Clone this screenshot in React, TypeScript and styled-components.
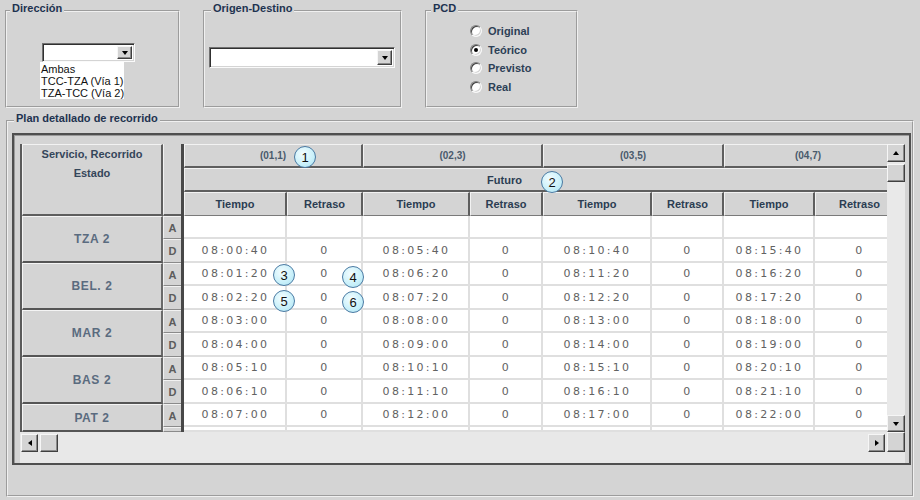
import React from "react";
import styled, { createGlobalStyle, css } from "styled-components";

const BG = "#d4d4d4";
const SANS = `"Liberation Sans", Arial, sans-serif`;
const DATA = `"DejaVu Sans", Verdana, sans-serif`;

const GlobalStyle = createGlobalStyle`
  *, *::before, *::after { box-sizing: border-box; }
  html, body { margin: 0; padding: 0; background: ${BG}; }
  body { font-family: ${SANS}; font-size: 11px; color: #222; }
`;

const raised = css`
  background: ${BG};
  border: 1px solid;
  border-color: #f6f6f6 #404040 #404040 #f6f6f6;
  box-shadow: inset -1px -1px 0 #8a8a8a;
`;

const Page = styled.div`
  position: relative;
  width: 920px;
  height: 500px;
  padding: 2px 6px 0 5px;
  background: ${BG};
  overflow: hidden;
`;

type Dir = "up" | "down" | "left" | "right";

const Arrow = styled.span<{ $dir: Dir }>`
  width: 0;
  height: 0;
  border-style: solid;
  border-color: transparent;
  ${({ $dir }) => {
    switch ($dir) {
      case "up":
        return css`border-width: 0 3.5px 4px 3.5px; border-bottom-color: #000;`;
      case "down":
        return css`border-width: 4px 3.5px 0 3.5px; border-top-color: #000;`;
      case "left":
        return css`border-width: 3.5px 4px 3.5px 0; border-right-color: #000;`;
      default:
        return css`border-width: 3.5px 0 3.5px 4px; border-left-color: #000;`;
    }
  }}
`;

const Btn = styled.div<{ $w: number; $h: number }>`
  ${raised};
  flex: none;
  width: ${(p) => p.$w}px;
  height: ${(p) => p.$h}px;
  display: flex;
  align-items: center;
  justify-content: center;
`;

/* ---------- top group boxes ---------- */

const TopRow = styled.div`
  display: flex;
  gap: 23px;
  height: 106px;
`;

const Group = styled.fieldset<{ $w: number }>`
  width: ${(p) => p.$w}px;
  height: 106px;
  min-width: 0;
  margin: 0;
  padding: 0;
  border: 2px groove #f0f0f0;
`;

const Legend = styled.legend<{ $ml: number }>`
  margin-left: ${(p) => p.$ml}px;
  padding: 0 2px 4px;
  font: bold 11px/13px ${SANS};
  color: #1e3350;
`;

const GroupBody = styled.div<{ $pt: number; $pl: number }>`
  display: flex;
  flex-direction: column;
  align-items: flex-start;
  padding: ${(p) => p.$pt}px 0 0 ${(p) => p.$pl}px;
`;

const Combo = styled.div<{ $w: number; $h: number }>`
  width: ${(p) => p.$w}px;
  height: ${(p) => p.$h}px;
  background: #fff;
  border: 1px solid;
  border-color: #707070 #fafafa #fafafa #707070;
  box-shadow: inset 1px 1px 0 #303030, inset -1px -1px 0 #d4d4d4;
  padding: 2px;
  display: flex;
  justify-content: flex-end;
`;

const ListBox = styled.div`
  margin-left: -2px;
  width: 84px;
  height: 37px;
  background: #fff;
  padding: 1px 0 0 1px;
  font: 11px/12px ${SANS};
  color: #111;
  white-space: nowrap;
`;

const RadioRow = styled.div`
  display: flex;
  align-items: center;
  gap: 6px;
  height: 18.5px;
  font: bold 11px ${SANS};
  color: #2c4056;
`;

const RadioDot = styled.span<{ $on?: boolean }>`
  position: relative;
  flex: none;
  width: 12px;
  height: 12px;
  border-radius: 50%;
  background: #fff;
  border: 1px solid;
  border-color: #808080 #f8f8f8 #f8f8f8 #808080;
  box-shadow: inset 1px 1px 0 #404040, inset -1px -1px 0 #d4d4d4;
  ${(p) =>
    p.$on &&
    css`
      &::after {
        content: "";
        position: absolute;
        left: 3px;
        top: 3px;
        width: 4px;
        height: 4px;
        border-radius: 50%;
        background: #000;
      }
    `}
`;

/* ---------- plan group ---------- */

const PlanGroup = styled.fieldset`
  width: 908px;
  min-width: 0;
  margin: 4px 0 0 1px;
  padding: 4px 1px 30px 4px;
  border: 2px groove #f0f0f0;
`;

const Frame = styled.div`
  width: 899px;
  height: 332px;
  border: 2px solid #4f4f4f;
  box-shadow: inset 1px 1px 0 #9a9a9a;
  padding: 9px 4px 0 6px;
  display: grid;
  grid-template-columns: 164px 703px 18px;
  grid-template-rows: 288px 31px;
`;

const Frozen = styled.div<{ $rows: string }>`
  display: grid;
  grid-template-columns: 141px 18px;
  grid-template-rows: 72px ${(p) => p.$rows};
  border-left: 2px solid #5a5a5a;
  border-right: 3px solid #484848;
  overflow: hidden;
`;

const CornerHead = styled.div`
  grid-column: 1;
  background: ${BG};
  border-top: 1px solid #f2f2f2;
  border-left: 1px solid #f2f2f2;
  border-right: 2px solid #5e5e5e;
  border-bottom: 2px solid #5e5e5e;
  display: flex;
  flex-direction: column;
  align-items: center;
  font: bold 11px/19px ${SANS};
  color: #34465a;
`;

const ADHead = styled.div`
  grid-column: 2;
  background: ${BG};
  border-left: 1px solid #f2f2f2;
  border-bottom: 2px solid #5e5e5e;
`;

const StationCell = styled.div<{ $span: number }>`
  grid-column: 1;
  grid-row: span ${(p) => p.$span};
  background: ${BG};
  border-top: 1px solid #f4f4f4;
  border-left: 1px solid #f4f4f4;
  border-right: 2px solid #6a6a6a;
  border-bottom: 2px solid #555;
  display: flex;
  align-items: center;
  justify-content: center;
  font: bold 12px ${SANS};
  letter-spacing: 0.6px;
  color: #5a6b7f;
  overflow: hidden;
`;

const ADCell = styled.div`
  grid-column: 2;
  background: ${BG};
  border-top: 1px solid #f2f2f2;
  border-left: 1px solid #f2f2f2;
  border-bottom: 1px solid #8a8a8a;
  display: flex;
  align-items: center;
  justify-content: center;
  font: bold 11px ${SANS};
  color: #5c5c5c;
  overflow: hidden;
`;

const Viewport = styled.div`
  overflow: hidden;
  background: #fff;
`;

const Sheet = styled.div<{ $cols: string; $rows: string }>`
  display: grid;
  width: max-content;
  grid-template-columns: ${(p) => p.$cols};
  grid-template-rows: 24px 24px 24px ${(p) => p.$rows};
`;

const HeadCell = styled.div<{ $span?: number; $kind?: "id" | "band" | "col"; $pr?: number }>`
  grid-column: span ${(p) => p.$span ?? 1};
  background: ${BG};
  border-top: 1px solid #f2f2f2;
  border-left: 1px solid #f2f2f2;
  border-right: 2px solid #5e5e5e;
  border-bottom: 2px solid #5e5e5e;
  display: flex;
  align-items: center;
  justify-content: center;
  padding-right: ${(p) => p.$pr ?? 0}px;
  font: bold 11px ${SANS};
  color: #2b3d52;
  white-space: nowrap;
  overflow: hidden;
  ${(p) =>
    p.$kind === "id" &&
    css`
      font-size: 10px;
      color: #4a5a6c;
    `}
  ${(p) =>
    p.$kind === "col" &&
    css`
      border-bottom: 1px solid #7a7a7a;
    `}
`;

const DataCell = styled.div`
  background: #fff;
  border-right: 2px solid #dfdfdf;
  border-bottom: 2px solid #dfdfdf;
  display: flex;
  align-items: center;
  justify-content: center;
  padding-left: 2px;
  font: 11px ${DATA};
  letter-spacing: 2.3px;
  color: #626262;
  white-space: nowrap;
  overflow: hidden;
`;

const VScroll = styled.div`
  display: flex;
  flex-direction: column;
  background: #e9e9e9;
`;

const Thumb = styled.div<{ $w: number; $h: number }>`
  ${raised};
  flex: none;
  width: ${(p) => p.$w}px;
  height: ${(p) => p.$h}px;
`;

const Fill = styled.div<{ $h?: number }>`
  flex: ${(p) => (p.$h ? "none" : "1")};
  height: ${(p) => (p.$h ? `${p.$h}px` : "auto")};
`;

const HBand = styled.div`
  grid-column: 1 / -1;
  display: flex;
  align-items: flex-start;
  background: #e8e8e8;
`;

const HButtons = styled.div`
  flex: 1;
  display: flex;
  align-items: center;
  gap: 2px;
  padding: 2px 2px 0 1px;
`;

const Corner = styled.div`
  ${raised};
  flex: none;
  width: 18px;
  height: 20px;
`;

const Badge = styled.div<{ $x: number; $y: number }>`
  position: absolute;
  left: ${(p) => p.$x - 11}px;
  top: ${(p) => p.$y - 11}px;
  width: 22px;
  height: 22px;
  border-radius: 50%;
  border: 1.5px solid #4a7aa3;
  background: radial-gradient(circle at 40% 35%, #f4fdff 0%, #c8f0fa 60%, #a8e0f0 100%);
  display: flex;
  align-items: center;
  justify-content: center;
  font: 13px/1 ${SANS};
  color: #111;
`;

/* ---------- data ---------- */

type Row = { ad: "A" | "D"; times: string[] | null; h: number; partial?: boolean };
type Station = { name: string; rows: Row[] };

const STATIONS: Station[] = [
  {
    name: "TZA 2",
    rows: [
      { ad: "A", times: null, h: 23 },
      { ad: "D", times: ["08:00:40", "08:05:40", "08:10:40", "08:15:40"], h: 24 },
    ],
  },
  {
    name: "BEL. 2",
    rows: [
      { ad: "A", times: ["08:01:20", "08:06:20", "08:11:20", "08:16:20"], h: 23 },
      { ad: "D", times: ["08:02:20", "08:07:20", "08:12:20", "08:17:20"], h: 24 },
    ],
  },
  {
    name: "MAR 2",
    rows: [
      { ad: "A", times: ["08:03:00", "08:08:00", "08:13:00", "08:18:00"], h: 23 },
      { ad: "D", times: ["08:04:00", "08:09:00", "08:14:00", "08:19:00"], h: 24 },
    ],
  },
  {
    name: "BAS 2",
    rows: [
      { ad: "A", times: ["08:05:10", "08:10:10", "08:15:10", "08:20:10"], h: 23 },
      { ad: "D", times: ["08:06:10", "08:11:10", "08:16:10", "08:21:10"], h: 24 },
    ],
  },
  {
    name: "PAT 2",
    rows: [
      { ad: "A", times: ["08:07:00", "08:12:00", "08:17:00", "08:22:00"], h: 23 },
      { ad: "D", times: null, h: 5, partial: true },
    ],
  },
];

const COLS = [103, 76, 107, 73, 109, 72, 91, 90];
const SERVICES = [
  { id: "(01,1)", pr: 0 },
  { id: "(02,3)", pr: 0 },
  { id: "(03,5)", pr: 0 },
  { id: "(04,7)", pr: 12 },
];

const BADGES = [
  { n: 1, x: 305, y: 157 },
  { n: 2, x: 552, y: 182 },
  { n: 3, x: 284, y: 275 },
  { n: 4, x: 353, y: 277 },
  { n: 5, x: 284, y: 301 },
  { n: 6, x: 353, y: 302 },
];

const PCD = [
  { label: "Original", on: false },
  { label: "Teórico", on: true },
  { label: "Previsto", on: false },
  { label: "Real", on: false },
];

export default function App() {
  const rowTemplate = STATIONS.flatMap((s) => s.rows.map((r) => `${r.h}px`)).join(" ");
  const colTemplate = COLS.map((c) => `${c}px`).join(" ");

  return (
    <>
      <GlobalStyle />
      <Page>
        <TopRow>
          <Group $w={175}>
            <Legend $ml={3}>Dirección</Legend>
            <GroupBody $pt={24} $pl={35}>
              <Combo $w={93} $h={19}>
                <Btn $w={15} $h={13}>
                  <Arrow $dir="down" />
                </Btn>
              </Combo>
              <ListBox>
                <div>Ambas</div>
                <div>TCC-TZA (Vía 1)</div>
                <div>TZA-TCC (Vía 2)</div>
              </ListBox>
            </GroupBody>
          </Group>

          <Group $w={199}>
            <Legend $ml={6}>Origen-Destino</Legend>
            <GroupBody $pt={28} $pl={4}>
              <Combo $w={186} $h={21}>
                <Btn $w={15} $h={15}>
                  <Arrow $dir="down" />
                </Btn>
              </Combo>
            </GroupBody>
          </Group>

          <Group $w={153}>
            <Legend $ml={4}>PCD</Legend>
            <GroupBody $pt={3} $pl={43}>
              {PCD.map((o) => (
                <RadioRow key={o.label}>
                  <RadioDot $on={o.on} />
                  {o.label}
                </RadioRow>
              ))}
            </GroupBody>
          </Group>
        </TopRow>

        <PlanGroup>
          <Legend $ml={2}>Plan detallado de recorrido</Legend>
          <Frame>
            <Frozen $rows={rowTemplate}>
              <CornerHead>
                <span>Servicio, Recorrido</span>
                <span>Estado</span>
              </CornerHead>
              <ADHead />
              {STATIONS.map((s) => (
                <React.Fragment key={s.name}>
                  <StationCell $span={s.rows.length}>{s.name}</StationCell>
                  {s.rows.map((r, i) => (
                    <ADCell key={i}>{r.partial ? "" : r.ad}</ADCell>
                  ))}
                </React.Fragment>
              ))}
            </Frozen>

            <Viewport>
              <Sheet $cols={colTemplate} $rows={rowTemplate}>
                {SERVICES.map((s) => (
                  <HeadCell key={s.id} $span={2} $kind="id" $pr={s.pr}>
                    {s.id}
                  </HeadCell>
                ))}
                <HeadCell $span={8} $kind="band" $pr={79}>
                  Futuro
                </HeadCell>
                {SERVICES.map((s) => (
                  <React.Fragment key={s.id}>
                    <HeadCell $kind="col">Tiempo</HeadCell>
                    <HeadCell $kind="col">Retraso</HeadCell>
                  </React.Fragment>
                ))}
                {STATIONS.flatMap((s) =>
                  s.rows.map((r, ri) =>
                    SERVICES.map((_, si) => (
                      <React.Fragment key={`${s.name}-${ri}-${si}`}>
                        <DataCell>{r.times ? r.times[si] : ""}</DataCell>
                        <DataCell>{r.times ? "0" : ""}</DataCell>
                      </React.Fragment>
                    ))
                  )
                )}
              </Sheet>
            </Viewport>

            <VScroll>
              <Btn $w={18} $h={18}>
                <Arrow $dir="up" />
              </Btn>
              <Fill $h={2} />
              <Thumb $w={18} $h={18} />
              <Fill />
              <Btn $w={18} $h={17}>
                <Arrow $dir="down" />
              </Btn>
            </VScroll>

            <HBand>
              <HButtons>
                <Btn $w={17} $h={18}>
                  <Arrow $dir="left" />
                </Btn>
                <Thumb $w={18} $h={18} />
                <Fill />
                <Btn $w={17} $h={18}>
                  <Arrow $dir="right" />
                </Btn>
              </HButtons>
              <Corner />
            </HBand>
          </Frame>
        </PlanGroup>

        {BADGES.map((b) => (
          <Badge key={b.n} $x={b.x} $y={b.y}>
            {b.n}
          </Badge>
        ))}
      </Page>
    </>
  );
}
